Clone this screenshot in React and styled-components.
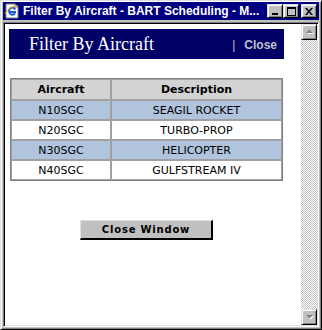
import styled, { createGlobalStyle, css } from 'styled-components';

const GlobalStyle = createGlobalStyle`
  html, body {
    margin: 0;
    padding: 0;
    background: #c0c0c0;
    overflow: hidden;
  }
`;

const raised = css`
  background: #c0c0c0;
  border: 1px solid;
  border-color: #dfdfdf #000 #000 #dfdfdf;
  box-shadow: inset 1px 1px #fff, inset -1px -1px #808080;
  box-sizing: border-box;
`;

const Window = styled.div`
  width: 322px;
  height: 330px;
  box-sizing: border-box;
  display: flex;
  flex-direction: column;
  padding: 1px 2px 2px 2px;
  background: #c0c0c0;
  border: 1px solid;
  border-color: #dfdfdf #000 #000 #dfdfdf;
  box-shadow: inset 1px 1px #fff, inset -1px -1px #808080;
`;

const TitleBar = styled.div`
  height: 18px;
  background: #000080;
  display: flex;
  align-items: center;
  padding: 0 2px 0 1px;
  gap: 3px;
`;

const TitleText = styled.div`
  flex: 1;
  color: #fff;
  font-family: "Liberation Sans", Arial, sans-serif;
  font-weight: bold;
  font-size: 12px;
  white-space: nowrap;
  overflow: hidden;
`;

const TitleButtons = styled.div`
  display: flex;
  align-items: center;
`;

const TitleButton = styled.div`
  ${raised};
  width: 16px;
  height: 14px;
  display: flex;
  align-items: center;
  justify-content: center;
  margin-left: ${p => (p.gap ? '2px' : '0')};
`;

const Client = styled.div`
  flex: 1;
  margin-top: 2px;
  display: flex;
  border: 1px solid;
  border-color: #808080 #fff #fff #808080;
  box-shadow: inset 1px 1px #000, inset -1px -1px #dfdfdf;
  padding: 1px;
  min-height: 0;
`;

const Content = styled.div`
  flex: 1;
  background: #fff;
  padding: 5px 0 0 4px;
`;

const Main = styled.div`
  width: 275px;
  display: flex;
  flex-direction: column;
  align-items: center;
`;

const Header = styled.div`
  align-self: stretch;
  height: 30px;
  background: #000066;
  display: flex;
  align-items: center;
  justify-content: space-between;
  padding: 0 7px 0 20px;
`;

const HeaderTitle = styled.div`
  color: #fff;
  font-family: "Liberation Serif", "Times New Roman", serif;
  font-size: 18px;
`;

const HeaderLink = styled.div`
  color: #c0c0c8;
  font-family: "Liberation Sans", Arial, sans-serif;
  font-size: 12px;
  font-weight: bold;
  display: flex;
  align-items: center;
  gap: 9px;
  padding-top: 1px;
`;

const Pipe = styled.span`
  font-weight: normal;
`;

const Table = styled.table`
  margin-top: 19px;
  width: 273px;
  border-spacing: 0;
  border: 1px solid #808080;
  font-family: "DejaVu Sans", Verdana, sans-serif;
  font-size: 11px;
`;

const HeadCell = styled.th`
  height: 19px;
  padding: 0;
  background: #d3d3d3;
  border: 1px solid #a0a0a0;
  font-weight: bold;
  color: #000;
  width: ${p => p.w || 'auto'};
`;

const Cell = styled.td`
  height: 18px;
  padding: 0;
  text-align: center;
  border: 1px solid #a0a0a0;
  color: #000;
  background: ${p => (p.alt ? '#b0c4de' : '#fff')};
`;

const CloseButton = styled.button`
  margin-top: 39px;
  width: 133px;
  height: 20px;
  background: #c0c0c0;
  border: none;
  border-top: 1px solid #e0e0e0;
  border-left: 1px solid #e0e0e0;
  border-right: 2px solid #000;
  border-bottom: 2px solid #000;
  font-family: "DejaVu Sans", Verdana, sans-serif;
  font-weight: bold;
  font-size: 10px;
  letter-spacing: 0.8px;
  color: #000;
  padding: 0;
`;

const Scrollbar = styled.div`
  width: 16px;
  display: flex;
  flex-direction: column;
`;

const ScrollButton = styled.div`
  ${raised};
  width: 16px;
  height: 16px;
  display: flex;
  align-items: center;
  justify-content: center;
`;

const Track = styled.div`
  flex: 1;
  background-color: #fff;
  background-image: repeating-conic-gradient(#c0c0c0 0 25%, #fff 0 50%);
  background-size: 2px 2px;
`;

function IeIcon() {
  return (
    <svg width="16" height="16" viewBox="0 0 16 16">
      <path d="M2 1h9l3 3v11H2z" fill="#fff" stroke="#808080" strokeWidth="1" />
      <path d="M11 1v3h3" fill="none" stroke="#808080" />
      <path d="M12 9H5.5a3 3 0 1 1 5.7-2.5" fill="none" stroke="#1c5cd6" strokeWidth="2" />
      <path d="M5.5 9a3 3 0 0 0 5.6 1.2" fill="none" stroke="#1c5cd6" strokeWidth="2" />
      <path d="M1 11c3-6 10-9 13-8" fill="none" stroke="#f0b000" strokeWidth="1" />
    </svg>
  );
}

function Arrow({ down }) {
  return (
    <svg width="9" height="6" viewBox="0 0 9 6">
      {down ? (
        <>
          <path d="M2 2h7L5.5 5.5z" fill="#fff" />
          <path d="M1 1h7L4.5 4.5z" fill="#808080" />
        </>
      ) : (
        <>
          <path d="M2 5h7L5.5 1.5z" fill="#fff" />
          <path d="M1 4h7L4.5 0.5z" fill="#808080" />
        </>
      )}
    </svg>
  );
}

const rows = [
  { tail: 'N10SGC', desc: 'SEAGIL ROCKET' },
  { tail: 'N20SGC', desc: 'TURBO-PROP' },
  { tail: 'N30SGC', desc: 'HELICOPTER' },
  { tail: 'N40SGC', desc: 'GULFSTREAM IV' },
];

export default function App() {
  return (
    <>
      <GlobalStyle />
      <Window>
        <TitleBar>
          <IeIcon />
          <TitleText>Filter By Aircraft - BART Scheduling - M...</TitleText>
          <TitleButtons>
            <TitleButton>
              <svg width="8" height="7" viewBox="0 0 8 7">
                <rect x="1" y="5" width="6" height="2" fill="#000" />
              </svg>
            </TitleButton>
            <TitleButton>
              <svg width="9" height="9" viewBox="0 0 9 9">
                <rect x="0.5" y="0.5" width="8" height="8" fill="none" stroke="#000" />
                <rect x="0" y="1" width="9" height="1" fill="#000" />
              </svg>
            </TitleButton>
            <TitleButton gap>
              <svg width="8" height="7" viewBox="0 0 8 7">
                <path d="M0 0h2l2 2.5L6 0h2L5 3.5 8 7H6L4 4.5 2 7H0l3-3.5z" fill="#000" />
              </svg>
            </TitleButton>
          </TitleButtons>
        </TitleBar>
        <Client>
          <Content>
            <Main>
              <Header>
                <HeaderTitle>Filter By Aircraft</HeaderTitle>
                <HeaderLink>
                  <Pipe>|</Pipe>
                  <span>Close</span>
                </HeaderLink>
              </Header>
              <Table>
                <thead>
                  <tr>
                    <HeadCell w="98px">Aircraft</HeadCell>
                    <HeadCell>Description</HeadCell>
                  </tr>
                </thead>
                <tbody>
                  {rows.map((r, i) => (
                    <tr key={r.tail}>
                      <Cell alt={i % 2 === 0}>{r.tail}</Cell>
                      <Cell alt={i % 2 === 0}>{r.desc}</Cell>
                    </tr>
                  ))}
                </tbody>
              </Table>
              <CloseButton>Close Window</CloseButton>
            </Main>
          </Content>
          <Scrollbar>
            <ScrollButton>
              <Arrow />
            </ScrollButton>
            <Track />
            <ScrollButton>
              <Arrow down />
            </ScrollButton>
          </Scrollbar>
        </Client>
      </Window>
    </>
  );
}
